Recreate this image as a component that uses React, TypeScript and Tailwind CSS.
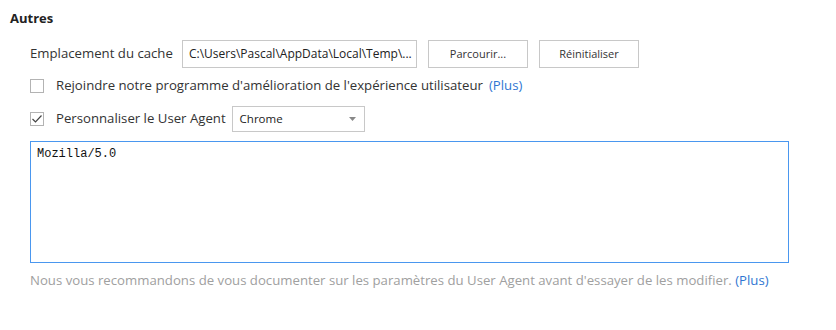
import { useState } from 'react';

const font = { fontFamily: '"Open Sans", "Noto Sans", sans-serif' };

const Checkbox = ({ checked }: { checked: boolean }) => (
  <span className="flex h-[14px] w-[14px] shrink-0 items-center justify-center border border-[#b3b3b3] bg-white">
    {checked && (
      <svg width="12" height="12" viewBox="0 0 12 12" fill="none">
        <path d="M1.5 6 L4.5 9 L10.5 2.5" stroke="#444" strokeWidth="1.2" />
      </svg>
    )}
  </span>
);

const App = () => {
  const [agent] = useState('Mozilla/5.0');

  return (
    <div className="h-[330px] w-[836px] bg-white text-[13.2px] text-[#333]" style={font}>
      <div className="px-[10px] pt-[10px]">
        <h2 className="text-[13px] leading-[16px] font-bold text-[#222]">Autres</h2>

        <div className="mt-[14px] flex flex-col pl-[20px]">
          {/* cache location */}
          <div className="flex h-[28px] items-center">
            <span className="w-[152px]">Emplacement du cache</span>
            <div className="flex h-[28px] w-[235px] items-center border border-[#c8c8c8] px-[6px] text-[12px] text-[#222]">
              C:\Users\Pascal\AppData\Local\Temp\...
            </div>
            <button className="ml-[11px] h-[28px] w-[100px] border border-[#c8c8c8] bg-white text-[11px] text-[#333]">
              Parcourir...
            </button>
            <button className="ml-[11px] h-[28px] w-[100px] border border-[#c8c8c8] bg-white text-[11px] text-[#333]">
              Réinitialiser
            </button>
          </div>

          {/* improvement program */}
          <div className="mt-[10px] flex h-[16px] items-center">
            <Checkbox checked={false} />
            <span className="ml-[12px]">
              Rejoindre notre programme d'amélioration de l'expérience utilisateur
            </span>
            <span className="ml-[6px] text-[#2f76d2]">(Plus)</span>
          </div>

          {/* user agent */}
          <div className="mt-[12px] flex h-[26px] items-center">
            <Checkbox checked={true} />
            <span className="ml-[12px]">Personnaliser le User Agent</span>
            <div className="ml-[6px] flex h-[26px] w-[133px] items-center justify-between border border-[#c8c8c8] pr-[8px] pl-[7px] text-[11.5px] text-[#222]">
              <span>Chrome</span>
              <svg width="7" height="4" viewBox="0 0 7 4">
                <path d="M0 0 L7 0 L3.5 4 Z" fill="#888" />
              </svg>
            </div>
          </div>

          <textarea
            readOnly
            value={agent}
            className="mt-[9px] h-[122px] w-[759px] resize-none border border-[#4a97ef] px-[6px] py-[5px] text-[12px] leading-[14px] text-[#111] outline-none"
            style={{ fontFamily: '"Liberation Mono", monospace' }}
          />

          <p className="mt-[8px] leading-[18px] text-[#a0a0a0]">
            Nous vous recommandons de vous documenter sur les paramètres du User Agent avant d'essayer de les modifier.{' '}
            <span className="text-[#2f76d2]">(Plus)</span>
          </p>
        </div>
      </div>
    </div>
  );
};

export default App;
